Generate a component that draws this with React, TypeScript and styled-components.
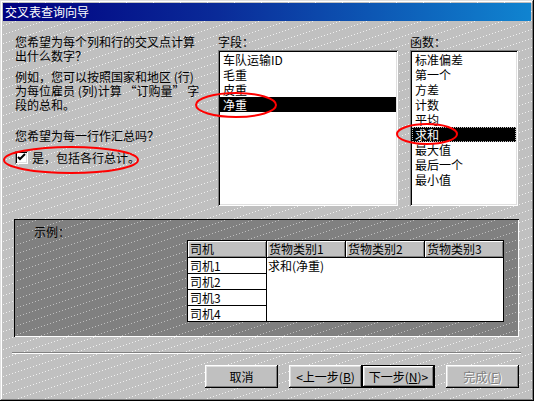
import React from "react";
import styled, { createGlobalStyle, css } from "styled-components";

const dotPattern = (color: string) => {
  const layers: string[] = [];
  for (let k = 0; k < 9; k++) {
    layers.push(
      `radial-gradient(circle at ${3 * k + 0.5}px ${8.5 - k}px, ${color} 0.45px, transparent 0.85px)`
    );
  }
  return css`
    background-image: ${layers.join(", ")};
    background-size: 27px 9px;
  `;
};

const GlobalStyle = createGlobalStyle`
  html, body { margin: 0; padding: 0; background: #c0c0c0; }
  body {
    font-family: "Noto Sans CJK SC", "Liberation Sans", sans-serif;
    font-size: 12px;
    color: #000;
  }
  * { box-sizing: border-box; }
`;

const Window = styled.div`
  position: relative;
  width: 534px;
  height: 401px;
  padding: 3px;
  background-color: #c0c0c0;
  ${dotPattern("rgba(255,255,255,0.75)")}
  box-shadow: inset -1px -1px #000, inset 1px 1px #dfdfdf,
    inset -2px -2px #808080, inset 2px 2px #fff;
  display: flex;
  flex-direction: column;
  overflow: hidden;
`;

const TitleBar = styled.div`
  flex: none;
  height: 18px;
  padding-left: 2px;
  background: linear-gradient(to right, #000080 0%, #0a2a98 40%, #1084d0 100%);
  color: #fff;
  font-size: 12px;
  line-height: 18px;
  white-space: nowrap;
`;

const TopSection = styled.div`
  display: grid;
  grid-template-columns: 191px 180px 108px;
  column-gap: 12px;
  padding: 14px 0 0 12px;
`;

const Intro = styled.div`
  display: flex;
  flex-direction: column;
  white-space: nowrap;
  line-height: 14px;
`;

const Para = styled.p<{ $gap: number }>`
  margin: ${(p) => p.$gap}px 0 0 0;
`;

const CheckRow = styled.label`
  display: flex;
  align-items: flex-start;
  gap: 4px;
  margin-top: 8px;
  line-height: 14px;
`;

const CheckBox = styled.span`
  flex: none;
  width: 13px;
  height: 13px;
  background: #fff;
  box-shadow: inset 1px 1px #808080, inset -1px -1px #fff,
    inset 2px 2px #000, inset -2px -2px #dfdfdf;
  display: flex;
  align-items: center;
  justify-content: center;
`;

const Column = styled.div`
  display: flex;
  flex-direction: column;
`;

const FieldLabel = styled.div`
  line-height: 14px;
  margin-bottom: 1px;
  white-space: nowrap;
`;

const ListBox = styled.div`
  height: 156px;
  padding: 2px;
  background: #fff;
  box-shadow: inset 1px 1px #808080, inset -1px -1px #fff,
    inset 2px 2px #000, inset -2px -2px #dfdfdf;
  overflow: hidden;
`;

const ListItem = styled.div<{ $selected?: boolean; $focused?: boolean }>`
  height: 15px;
  line-height: 15px;
  padding-left: 3px;
  white-space: nowrap;
  ${(p) =>
    p.$selected &&
    css`
      background: #000;
      color: #fff;
    `}
  ${(p) =>
    p.$focused &&
    css`
      outline: 1px dotted #c0c0c0;
      outline-offset: -1px;
    `}
`;

const ExamplePanel = styled.div`
  margin: 13px 0 0 11px;
  width: 505px;
  height: 118px;
  padding: 6px 15px 0 20px;
  background-color: #808080;
  ${dotPattern("rgba(230,230,230,0.6)")}
  box-shadow: inset 1px 1px #000, inset -1px -1px #fff;
  display: flex;
  flex-direction: column;
`;

const PanelLabel = styled.div`
  line-height: 14px;
  color: #000;
`;

const SampleTable = styled.div`
  align-self: flex-end;
  margin-top: 1px;
  display: grid;
  grid-template-columns: repeat(4, 79px);
  grid-template-rows: 17px repeat(4, 16px);
  border-top: 1px solid #000;
  border-left: 1px solid #000;
  background: #fff;
`;

const HeadCell = styled.div`
  background: #c0c0c0;
  border-right: 1px solid #000;
  border-bottom: 1px solid #000;
  box-shadow: inset 1px 1px #fff, inset -1px -1px #808080;
  padding-left: 2px;
  line-height: 16px;
  white-space: nowrap;
`;

const RowCell = styled.div`
  background: #fff;
  border-right: 1px solid #000;
  border-bottom: 1px solid #000;
  padding-left: 2px;
  line-height: 15px;
  white-space: nowrap;
`;

const DataArea = styled.div`
  grid-column: 2 / span 3;
  grid-row: 2 / span 4;
  background: #fff;
  border-right: 1px solid #000;
  border-bottom: 1px solid #000;
  padding-left: 1px;
  line-height: 15px;
`;

const Separator = styled.div`
  margin: 15px 10px 0 9px;
  height: 2px;
  border-top: 1px solid #808080;
  border-bottom: 1px solid #fff;
`;

const ButtonRow = styled.div`
  display: flex;
  justify-content: flex-end;
  padding-right: 12px;
  margin-top: 11px;
`;

const Button = styled.button<{ $default?: boolean; $gapLeft?: number }>`
  width: 73px;
  height: 23px;
  margin-left: ${(p) => p.$gapLeft ?? 0}px;
  padding: 0;
  font-family: inherit;
  font-size: 12px;
  color: #000;
  background: #c0c0c0;
  border: none;
  box-shadow: inset -1px -1px #000, inset 1px 1px #fff,
    inset -2px -2px #808080, inset 2px 2px #dfdfdf;
  white-space: nowrap;
  ${(p) =>
    p.$default &&
    css`
      box-shadow: inset 0 0 0 1px #000, inset -2px -2px #000,
        inset 2px 2px #fff, inset -3px -3px #808080, inset 3px 3px #dfdfdf;
    `}
  &:disabled {
    color: #808080;
    text-shadow: 1px 1px #fff;
  }
`;

const Overlay = styled.svg`
  position: absolute;
  left: 0;
  top: 0;
  pointer-events: none;
`;

const fields = ["车队运输ID", "毛重", "皮重", "净重"];
const funcs = [
  "标准偏差",
  "第一个",
  "方差",
  "计数",
  "平均",
  "求和",
  "最大值",
  "最后一个",
  "最小值",
];

export default function App() {
  return (
    <>
      <GlobalStyle />
      <Window>
        <TitleBar>交叉表查询向导</TitleBar>
        <TopSection>
          <Intro>
            <Para $gap={0}>
              您希望为每个列和行的交叉点计算
              <br />
              出什么数字？
            </Para>
            <Para $gap={7}>
              例如，您可以按照国家和地区 (行)
              <br />
              为每位雇员 (列)计算 “订购量” 字
              <br />
              段的总和。
            </Para>
            <Para $gap={17}>您希望为每一行作汇总吗？</Para>
            <CheckRow>
              <CheckBox>
                <svg width="9" height="9" viewBox="0 0 9 9">
                  <path
                    d="M1 4 L3 6 L8 1"
                    stroke="#000"
                    strokeWidth="2"
                    fill="none"
                  />
                </svg>
              </CheckBox>
              是，包括各行总计。
            </CheckRow>
          </Intro>
          <Column>
            <FieldLabel>字段：</FieldLabel>
            <ListBox>
              {fields.map((f, i) => (
                <ListItem key={f} $selected={i === 3}>
                  {f}
                </ListItem>
              ))}
            </ListBox>
          </Column>
          <Column>
            <FieldLabel>函数：</FieldLabel>
            <ListBox>
              {funcs.map((f, i) => (
                <ListItem key={f} $selected={i === 5} $focused={i === 5}>
                  {f}
                </ListItem>
              ))}
            </ListBox>
          </Column>
        </TopSection>
        <ExamplePanel>
          <PanelLabel>示例：</PanelLabel>
          <SampleTable>
            <HeadCell>司机</HeadCell>
            <HeadCell>货物类别1</HeadCell>
            <HeadCell>货物类别2</HeadCell>
            <HeadCell>货物类别3</HeadCell>
            <RowCell>司机1</RowCell>
            <DataArea>求和(净重)</DataArea>
            <RowCell>司机2</RowCell>
            <RowCell>司机3</RowCell>
            <RowCell>司机4</RowCell>
          </SampleTable>
        </ExamplePanel>
        <Separator />
        <ButtonRow>
          <Button>取消</Button>
          <Button $gapLeft={11}>
            &lt;上一步(<u>B</u>)
          </Button>
          <Button $default>
            下一步(<u>N</u>)&gt;
          </Button>
          <Button $gapLeft={11} disabled>
            完成(<u>F</u>)
          </Button>
        </ButtonRow>
        <Overlay width="534" height="401" viewBox="0 0 534 401">
          <ellipse cx="71" cy="160" rx="67" ry="13" fill="none" stroke="#f00" strokeWidth="2" />
          <ellipse cx="236" cy="105" rx="40" ry="12" fill="none" stroke="#f00" strokeWidth="2" />
          <ellipse cx="427" cy="134" rx="30" ry="10" fill="none" stroke="#f00" strokeWidth="2" />
        </Overlay>
      </Window>
    </>
  );
}
